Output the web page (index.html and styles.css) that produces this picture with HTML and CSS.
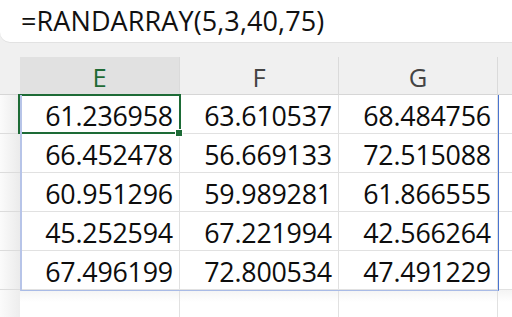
FILE: index.html
```html
<!DOCTYPE html>
<html>
<head>
<meta charset="utf-8">
<link rel="stylesheet" href="styles.css">
</head>
<body>
<div class="app">
  <div class="formula-bar"><span class="formula">=RANDARRAY(5,3,40,75)</span></div>
  <div class="gap"></div>
  <div class="sheet">
    <div class="corner"></div>
    <div class="colhead sel">E</div>
    <div class="colhead">F</div>
    <div class="colhead">G</div>
    <div class="colhead rest"></div>

    <div class="rowhead"></div>
    <div class="cell active">61.236958<span class="handle"></span></div>
    <div class="cell">63.610537</div>
    <div class="cell">68.484756</div>
    <div class="cell rest"></div>

    <div class="rowhead"></div>
    <div class="cell">66.452478</div>
    <div class="cell">56.669133</div>
    <div class="cell">72.515088</div>
    <div class="cell rest"></div>

    <div class="rowhead"></div>
    <div class="cell">60.951296</div>
    <div class="cell">59.989281</div>
    <div class="cell">61.866555</div>
    <div class="cell rest"></div>

    <div class="rowhead"></div>
    <div class="cell">45.252594</div>
    <div class="cell">67.221994</div>
    <div class="cell">42.566264</div>
    <div class="cell rest"></div>

    <div class="rowhead"></div>
    <div class="cell">67.496199</div>
    <div class="cell">72.800534</div>
    <div class="cell">47.491229</div>
    <div class="cell rest"></div>

    <div class="rowhead tail"></div>
    <div class="cell tail"></div>
    <div class="cell tail"></div>
    <div class="cell tail"></div>
    <div class="cell tail rest"></div>

    <div class="spill"></div>
  </div>
</div>
</body>
</html>
```
FILE: styles.css
```css
html, body {
  margin: 0;
  padding: 0;
}
body {
  width: 512px;
  height: 317px;
  overflow: hidden;
  background: #f0f0f0;
  font-family: "Open Sans", "Noto Sans", sans-serif;
}
.app {
  display: flex;
  flex-direction: column;
  height: 317px;
}
.formula-bar {
  height: 42px;
  background: #ffffff;
  border-bottom-left-radius: 10px;
  box-shadow: 0 1px 0 #e2e2e2;
  display: flex;
  align-items: center;
  padding-left: 21px;
  box-sizing: border-box;
}
.formula {
  font-size: 27px;
  color: #111;
  letter-spacing: 0.1px;
  line-height: 1;
  padding-bottom: 1px;
}
.gap {
  height: 15px;
}
.sheet {
  position: relative;
  display: grid;
  grid-template-columns: 20px 160px 159px 159px 1fr;
  grid-template-rows: 38px repeat(5, 39px) 1fr;
  flex: 1;
  background: #ffffff;
}
.corner {
  background: #f0f0f0;
  border-bottom: 1px solid #d6d6d6;
}
.colhead {
  background: #f0f0f0;
  border-right: 1px solid #dadada;
  border-bottom: 1px solid #d6d6d6;
  display: flex;
  align-items: center;
  justify-content: center;
  font-size: 25.5px;
  color: #444;
  padding-top: 2px;
  box-sizing: border-box;
}
.colhead.sel {
  background: #e1e1e1;
  color: #1f6b35;
}
.colhead.rest {
  border-right: none;
}
.rowhead {
  background: linear-gradient(to right, #fbfbfb, #ebebeb);
  border-bottom: 1px solid #dcdcdc;
}
.cell {
  position: relative;
  border-right: 1px solid #e1e1e1;
  border-bottom: 1px solid #e1e1e1;
  display: flex;
  align-items: center;
  justify-content: flex-end;
  padding-right: 6px;
  padding-top: 3px;
  box-sizing: border-box;
  font-size: 26.8px;
  color: #0d0d0d;
  letter-spacing: -0.2px;
}
.cell.rest {
  border-right: none;
}
.tail {
  border-bottom: none;
  background: linear-gradient(to bottom, #f4f4f4, #ffffff 12px);
}
.rowhead.tail {
  background: linear-gradient(to right, #fbfbfb, #ededed);
}
.cell.active::before {
  content: "";
  position: absolute;
  left: -2px;
  top: -1px;
  right: -2px;
  bottom: -1px;
  border: 2px solid #1d6b36;
  pointer-events: none;
}
.handle {
  position: absolute;
  right: -4px;
  bottom: -4px;
  width: 6px;
  height: 6px;
  background: #1d6b36;
  border: 1px solid #ffffff;
  z-index: 2;
}
.spill {
  position: absolute;
  left: 20px;
  top: 38px;
  width: 479px;
  height: 196px;
  box-sizing: border-box;
  border-left: 2px solid #b7c4e8;
  border-bottom: 1px solid #a9bbe6;
  border-right: 1px solid #4a74d0;
  pointer-events: none;
}
```
